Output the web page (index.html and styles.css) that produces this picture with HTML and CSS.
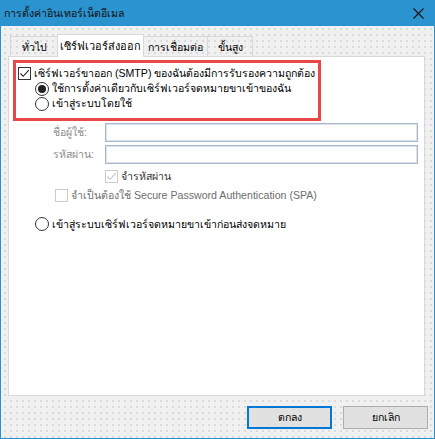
FILE: index.html
```html
<!DOCTYPE html>
<html lang="th">
<head>
  <meta charset="UTF-8" />
  <title>การตั้งค่าอินเทอร์เน็ตอีเมล</title>
  <link rel="stylesheet" href="styles.css">
</head>
<body>
  <div class="window">
    <div class="titlebar">
      <span class="title">การตั้งค่าอินเทอร์เน็ตอีเมล</span>
      <svg class="close" width="11" height="11" viewBox="0 0 11 11"><path d="M0.5 0.5 L10.5 10.5 M10.5 0.5 L0.5 10.5" stroke="#111" stroke-width="1.1" fill="none"/></svg>
    </div>

    <div class="content">
      <div class="tabs">
        <div class="tab t1">ทั่วไป</div>
        <div class="tab t2 active">เซิร์ฟเวอร์ส่งออก</div>
        <div class="tab t3">การเชื่อมต่อ</div>
        <div class="tab t4">ขั้นสูง</div>
      </div>

      <div class="panel">
        <div class="highlight">
          <div class="row">
            <span class="check"><svg width="11" height="11" viewBox="0 0 11 11"><path d="M1.5 5.5 L4.2 8.3 L9.8 2.2" stroke="#222" stroke-width="1.1" fill="none"/></svg></span>
            <span>เซิร์ฟเวอร์ขาออก (SMTP) ของฉันต้องมีการรับรองความถูกต้อง</span>
          </div>
          <div class="row indent">
            <span class="radio on"></span>
            <span>ใช้การตั้งค่าเดียวกับเซิร์ฟเวอร์จดหมายขาเข้าของฉัน</span>
          </div>
          <div class="row indent">
            <span class="radio"></span>
            <span>เข้าสู่ระบบโดยใช้</span>
          </div>
        </div>

        <div class="field first">
          <label class="dim">ชื่อผู้ใช้:</label>
          <div class="input"></div>
        </div>
        <div class="field">
          <label class="dim">รหัสผ่าน:</label>
          <div class="input"></div>
        </div>

        <div class="row remember">
          <span class="check off"><svg width="11" height="11" viewBox="0 0 11 11"><path d="M1.5 5.5 L4.2 8.3 L9.8 2.2" stroke="#c4c4c4" stroke-width="1.1" fill="none"/></svg></span>
          <span class="mid">จำรหัสผ่าน</span>
        </div>
        <div class="row spa">
          <span class="check off"></span>
          <span class="mid">จำเป็นต้องใช้ Secure Password Authentication (SPA)</span>
        </div>

        <div class="row before">
          <span class="radio"></span>
          <span>เข้าสู่ระบบเซิร์ฟเวอร์จดหมายขาเข้าก่อนส่งจดหมาย</span>
        </div>
      </div>

      <div class="buttons">
        <button class="btn default">ตกลง</button>
        <button class="btn">ยกเลิก</button>
      </div>
    </div>
  </div>
</body>
</html>
```

FILE: styles.css
```css
body { margin: 0; font-family: "Liberation Sans", sans-serif; font-size: 10.6px; color: #000; }
.window { width: 435px; height: 439px; box-sizing: border-box; border: 1px solid #2b8fcb; border-top: none; display: flex; flex-direction: column; background-color: #f0f0f0; background-image: radial-gradient(#d9d9d9 0.7px, transparent 0.8px); background-size: 6px 6px; background-position: 1px 2px; }
.titlebar { height: 26px; background: #2b93cf; display: flex; align-items: center; justify-content: space-between; padding: 0 11px 0 4px; margin: 0 -1px; color: #111; }
.content { padding: 7px 6px 0 7px; display: flex; flex-direction: column; }
.tabs { display: flex; align-items: flex-end; height: 23px; padding-left: 2px; position: relative; z-index: 1; }
.tab { height: 19px; line-height: 20px; box-sizing: content-box; border: 1px solid #d9d9d9; border-bottom: none; margin-right: -1px; white-space: nowrap; text-align: center; }
.t1 { width: 46px; }
.t2 { width: 85px; }
.t3 { width: 63px; }
.t4 { width: 44px; }
.tab.active { height: 22px; line-height: 22px; background: #fff; margin-bottom: -1px; position: relative; font-size: 11px; }
.panel { width: 417px; height: 340px; box-sizing: border-box; background: #fff; border: 1px solid #d9d9d9; padding: 3px 0 0 4px; }
.highlight { width: 308px; height: 61px; box-sizing: border-box; border: 3px solid #e8484a; padding: 3px 0 0 2px; }
.row { display: flex; align-items: center; height: 15px; white-space: nowrap; }
.indent { padding-left: 17px; }
.check { width: 13px; height: 13px; box-sizing: border-box; border: 1px solid #333; background: #fff; margin-right: 3px; display: flex; align-items: center; justify-content: center; flex: none; }
.check.off { border-color: #cccccc; }
.radio { width: 14px; height: 14px; box-sizing: border-box; border: 1px solid #333; border-radius: 50%; background: #fff; margin-right: 3px; flex: none; display: flex; align-items: center; justify-content: center; }
.radio.on::after { content: ""; width: 8px; height: 8px; border-radius: 50%; background: #222; }
.field { display: flex; align-items: center; height: 19px; margin: 3px 6px 0 40px; }
.field.first { margin-top: 2px; }
.field label { width: 52px; flex: none; }
.input { flex: 1; height: 19px; box-sizing: border-box; border: 1px solid #a8b8cc; box-shadow: inset 0 0 0 1px #dbe2ea; }
.dim { color: #8c8c8c; }
.mid { color: #6d6d6d; }
.remember { margin: 4px 0 0 92px; height: 16px; }
.remember .mid { color: #333; }
.spa { margin: 3px 0 0 42px; height: 16px; }
.before { margin: 13px 0 0 22px; height: 16px; }
.buttons { display: flex; justify-content: flex-end; gap: 11px; margin-top: 10px; }
.btn { width: 85px; height: 23px; box-sizing: border-box; background: #e1e1e1; border: 1px solid #adadad; font-family: inherit; font-size: 10.6px; color: #000; padding: 0; }
.btn.default { border: 2px solid #0078d7; }
```
